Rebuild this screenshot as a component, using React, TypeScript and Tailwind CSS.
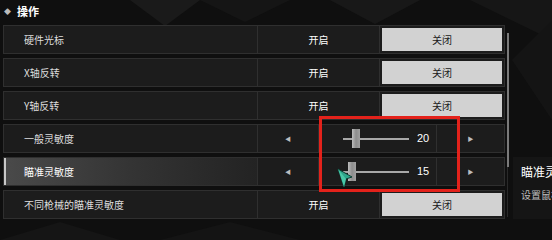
const font = { fontFamily: '"Noto Sans CJK SC", "Noto Sans", sans-serif' };

type ToggleRow = { kind: "toggle"; label: string; on: boolean };
type SliderRow = { kind: "slider"; label: string; value: number; thumbLeft: number; active?: boolean };
type Row = ToggleRow | SliderRow;

const rows: Row[] = [
  { kind: "toggle", label: "硬件光标", on: false },
  { kind: "toggle", label: "X轴反转", on: false },
  { kind: "toggle", label: "Y轴反转", on: false },
  { kind: "slider", label: "一般灵敏度", value: 20, thumbLeft: 9 },
  { kind: "slider", label: "瞄准灵敏度", value: 15, thumbLeft: 5, active: true },
  { kind: "toggle", label: "不同枪械的瞄准灵敏度", on: false }
];

function Backdrop() {
  return (
    <svg className="absolute inset-0" width="552" height="240" viewBox="0 0 552 240">
      <rect width="552" height="240" fill="#0f0f0f" />
      <polygon points="130,0 200,0 165,26" fill="#1a1a1a" />
      <polygon points="200,0 290,0 245,22" fill="#151515" />
      <polygon points="330,0 420,0 375,24" fill="#181818" />
      <polygon points="470,0 552,0 552,40" fill="#161616" />
      <polygon points="512,60 552,20 552,120" fill="#141414" />
      <polygon points="0,240 60,222 120,240" fill="#151515" />
      <polygon points="160,240 230,222 300,240" fill="#141414" />
    </svg>
  );
}

function LabelCell(props: { label: string; active?: boolean }) {
  return (
    <div
      className={
        "relative flex w-[255px] shrink-0 items-center border border-[#2f2f2f] pl-[20px] text-[10px] " +
        (props.active
          ? "bg-gradient-to-r from-[#4a4a4a] via-[#343434] to-[#232323] text-white"
          : "bg-[#1c1c1c] text-[#dedede]")
      }
    >
      {props.active && <div className="absolute left-0 top-0 h-full w-[2px] bg-[#c8c8c8]" />}
      {props.label}
    </div>
  );
}

function Toggle(props: { on: boolean }) {
  return (
    <div className="flex flex-1 text-[10px]">
      <div className="flex w-[122px] items-center justify-center border border-l-0 border-[#2f2f2f] bg-[#1c1c1c] text-white">
        开启
      </div>
      <div className="flex flex-1 border border-l-0 border-[#2f2f2f] bg-[#1c1c1c] p-[2px]">
        <div className="flex flex-1 items-center justify-center bg-[#d2d2d2] text-[#1a1a1a]">关闭</div>
      </div>
    </div>
  );
}

function Slider(props: { value: number; thumbLeft: number }) {
  return (
    <div className="flex flex-1 text-[#bdbdbd]">
      <div className="flex w-[61px] items-center justify-center border border-l-0 border-[#2f2f2f] bg-[#1c1c1c] text-[6px]">
        ◀
      </div>
      <div className="flex w-[118px] items-center border border-l-0 border-[#2f2f2f] bg-[#1c1c1c]">
        <div className="relative ml-[24px] h-[2px] w-[66px] bg-[#a8a8a8]">
          <div
            className="absolute top-[-9px] h-[19px] w-[8px] bg-gradient-to-r from-[#bdbdbd] via-[#8d8d8d] to-[#a0a0a0]"
            style={{ left: props.thumbLeft }}
          />
        </div>
        <span className="ml-[8px] text-[11px] text-white" style={{ fontFamily: '"Liberation Sans", sans-serif' }}>
          {props.value}
        </span>
      </div>
      <div className="flex flex-1 items-center justify-center border border-l-0 border-[#2f2f2f] bg-[#1c1c1c] text-[6px]">
        ▶
      </div>
    </div>
  );
}

function Cursor() {
  return (
    <svg className="absolute left-[337px] top-[168px]" width="16" height="20" viewBox="0 0 16 20">
      <polygon points="1,1 15,9 9,11 7,19" fill="#2fa58a" stroke="#0d3d33" strokeWidth="1" />
      <polygon points="1,1 9,11 7,19" fill="#49c7a7" />
    </svg>
  );
}

export default function App() {
  return (
    <div className="relative h-[240px] w-[552px] overflow-hidden bg-[#0f0f0f]" style={font}>
      <Backdrop />
      <div className="relative flex h-full">
        <div className="flex w-[505px] shrink-0 flex-col">
          <div className="flex h-[25px] items-center gap-[6px] pb-[3px] pl-[4px] text-[11px] font-bold text-white">
            <span className="text-[7px] text-[#bcbcbc]">◆</span>
            操作
          </div>
          <div className="flex flex-col gap-[4px] pl-[3px]">
            {rows.map((row) => (
              <div key={row.label} className="flex h-[29px]">
                <LabelCell label={row.label} active={row.kind === "slider" ? row.active : false} />
                {row.kind === "toggle" ? <Toggle on={row.on} /> : <Slider value={row.value} thumbLeft={row.thumbLeft} />}
              </div>
            ))}
          </div>
        </div>
        <div className="ml-[2px] w-[2px] shrink-0 pt-[33px]">
          <div className="h-[134px] w-[2px] bg-[#7a7a7a]" />
          <div className="h-[50px] w-[1px] bg-[#2a2a2a]" />
        </div>
        <div className="ml-[4px] mt-[157px] flex h-[62px] min-w-0 flex-1 flex-col gap-[6px] overflow-hidden whitespace-nowrap bg-[#151515] pl-[8px] pt-[6px]">
          <div className="text-[12px] text-white">瞄准灵敏度</div>
          <div className="text-[10px] text-[#bdbdbd]">设置鼠标瞄准时的灵敏度</div>
        </div>
      </div>
      <div className="absolute left-[319px] top-[116px] h-[76px] w-[141px] border-[3px] border-[#e3221b]" />
      <Cursor />
    </div>
  );
}
